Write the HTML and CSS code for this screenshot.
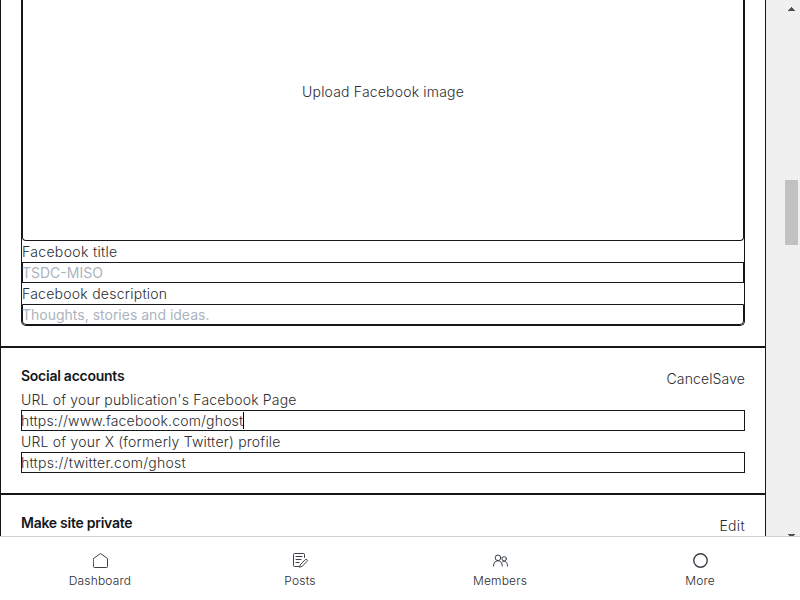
FILE: index.html
```html
<!DOCTYPE html>
<html lang="en">
<head>
<meta charset="utf-8">
<title>Settings</title>
<link rel="stylesheet" href="styles.css">
</head>
<body>
<div class="app">
  <div class="viewport">
    <main class="settings">
      <section class="section section-first">
        <div class="card">
          <div class="upload"><span>Upload Facebook image</span></div>
          <label class="label label-title">Facebook title</label>
          <div class="field placeholder">TSDC-MISO</div>
          <label class="label label-card">Facebook description</label>
          <div class="field field-last placeholder">Thoughts, stories and ideas.</div>
        </div>
      </section>
      <section class="section">
        <header class="head"><h2 class="title">Social accounts</h2><div class="actions"><span>Cancel</span><span>Save</span></div></header>
        <label class="label">URL of your publication's Facebook Page</label>
        <div class="field"><span>https://www.facebook.com/ghost</span><i class="caret"></i></div>
        <label class="label label-x">URL of your X (formerly Twitter) profile</label>
        <div class="field field-x">https://twitter.com/ghost</div>
      </section>
      <section class="section">
        <header class="head"><h2 class="title">Make site private</h2><div class="actions"><span class="edit">Edit</span></div></header>
      </section>
    </main>
    <aside class="scrollbar">
      <svg class="arrow" width="7" height="4" viewBox="0 0 7 4" shape-rendering="crispEdges"><path d="M3 0h1v1h1v1h1v1h1v1H0V3h1V2h1V1h1z"/></svg>
      <div class="thumb"></div>
      <svg class="arrow" width="7" height="4" viewBox="0 0 7 4" shape-rendering="crispEdges"><path d="M0 0h7v1H6v1H5v1H4v1H3V3H2V2H1V1H0z"/></svg>
    </aside>
  </div>
  <nav class="nav">
    <a class="item">
      <svg class="icon" viewBox="0 0 15 15"><path d="M.5 5.500 7.500.500l7 5v8.200q0 .8-.8.800H1.300q-.8 0-.8-.8z"/></svg>
      <span>Dashboard</span>
    </a>
    <a class="item">
      <svg class="icon" viewBox="0 0 15 15"><path d="M11.500 4.500v-3q0-1-1-1h-9q-1 0-1 1v11q0 1 1 1h4.500M3 3.500h6M3 6.500h5M3 9.500h3M7.500 11.600l4.700-4.900q.8-.8 1.700-.1.900.8.100 1.700l-4.800 5-2.300.800z"/></svg>
      <span>Posts</span>
    </a>
    <a class="item">
      <svg class="icon" viewBox="0 0 15 15"><circle cx="5" cy="4.800" r="2.800"/><circle cx="11.200" cy="5.800" r="2.200"/><path d="M.5 13c0-3.200 1.800-5.200 4.400-5.200S9.300 9.800 9.300 13M9.600 8.800c2.600-1.600 4.900.2 4.900 4.200"/></svg>
      <span>Members</span>
    </a>
    <a class="item">
      <svg class="icon icon-more" viewBox="0 0 15 15"><circle cx="7.500" cy="7.500" r="6.700"/></svg>
      <span>More</span>
    </a>
  </nav>
</div>
</body>
</html>
```
FILE: styles.css
```css
* { box-sizing: border-box; }
body {
  margin: 0;
  font-family: Inter, "Liberation Sans", sans-serif;
  font-size: 14px;
  font-weight: 300;
  line-height: 21px;
  letter-spacing: .18px;
  color: #2b2d30;
  background: #fff;
}
.app { display: flex; flex-direction: column; height: 600px; overflow: hidden; }
.viewport { display: flex; height: 536px; overflow: hidden; }
.settings { width: 766px; height: 536px; overflow: hidden; }
.section { border: 1px solid #15171a; padding: 20px; }
.section-first { height: 347px; border-top: 0; padding-top: 0; }
.card {
  height: 326px;
  border: 1px solid #15171a;
  border-top: 0;
  border-radius: 0 0 5px 5px;
}
.upload {
  display: flex;
  justify-content: center;
  height: 241px;
  padding-top: 81px;
  border: 1px solid #15171a;
  border-top: 0;
  border-radius: 0 0 4px 4px;
}
.label { display: block; height: 21px; line-height: 22px; }
.label-title { letter-spacing: .33px; }
.label-card { letter-spacing: .25px; }
.label-x { letter-spacing: .21px; }
.field {
  display: flex;
  align-items: center;
  height: 21px;
  border: 1px solid #15171a;
  line-height: 19px;
  text-indent: -1px;
}
.field-x { letter-spacing: .26px; }
.field-last { border-radius: 0 0 4px 4px; }
.placeholder { font-weight: 400; letter-spacing: 0; color: #abb4be; }
.caret { width: 1px; height: 17px; background: #000; }
.head { display: flex; justify-content: space-between; height: 21px; }
.title { margin: 0; font-size: 14px; font-weight: 600; line-height: 16px; letter-spacing: -.26px; color: #15171a; }
.actions { display: flex; line-height: 22px; letter-spacing: .12px; }
.edit { letter-spacing: .35px; }
.scrollbar {
  display: flex;
  flex-direction: column;
  width: 34px;
  padding: 7px 0 0 19px;
  background: #f0f0f0;
}
.arrow { display: block; flex: none; margin-left: 3px; fill: #505050; }
.thumb { flex: none; width: 13px; height: 65px; margin: 169px 0 289px; background: #c1c1c1; }
.nav {
  display: grid;
  grid-template-columns: repeat(4, 1fr);
  height: 64px;
  border-top: 1px solid #ced4d9;
  background: #fff;
}
.item {
  display: flex;
  flex-direction: column;
  align-items: center;
  padding-top: 16px;
  font-size: 12px;
  line-height: 16px;
}
.icon { width: 15px; height: 15px; margin: 0 0 5px 1px; fill: none; stroke: #394047; stroke-width: 1; stroke-linecap: round; stroke-linejoin: round; }
.icon-more { stroke-width: 1.4; }
```
